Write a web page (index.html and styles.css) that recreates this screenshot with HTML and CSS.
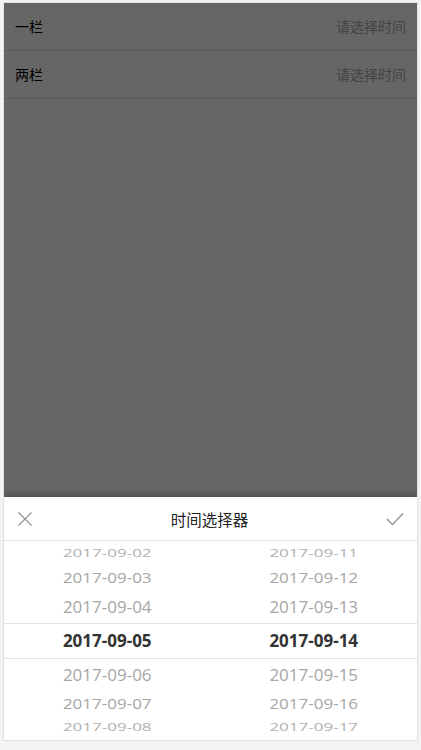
FILE: index.html
```html
<!DOCTYPE html>
<html lang="zh">
<head>
<meta charset="utf-8">
<title>时间选择器</title>
<link rel="stylesheet" href="styles.css">
</head>
<body>
<div class="screen">
  <ul class="list">
    <li class="row"><span class="label">一栏</span><span class="value">请选择时间</span></li>
    <li class="row"><span class="label">两栏</span><span class="value">请选择时间</span></li>
  </ul>
  <div class="mask"></div>
  <div class="picker">
    <div class="picker-head">
      <svg class="icon icon-close" viewBox="0 0 16 16" width="16" height="16"><path d="M1.5 1.5 L14.5 14.5 M14.5 1.5 L1.5 14.5" stroke="#999" stroke-width="1.4" fill="none"/></svg>
      <span class="picker-title">时间选择器</span>
      <svg class="icon icon-ok" viewBox="0 0 18 14" width="18" height="14"><path d="M1 7 L6.5 12.5 L17 1.5" stroke="#999" stroke-width="1.5" fill="none"/></svg>
    </div>
    <div class="wheels">
      <div class="band"></div>
      <div class="wheel">
        <div class="item far">2017-09-02</div>
        <div class="item mid">2017-09-03</div>
        <div class="item near">2017-09-04</div>
        <div class="item current">2017-09-05</div>
        <div class="item near">2017-09-06</div>
        <div class="item mid">2017-09-07</div>
        <div class="item far">2017-09-08</div>
      </div>
      <div class="wheel">
        <div class="item far">2017-09-11</div>
        <div class="item mid">2017-09-12</div>
        <div class="item near">2017-09-13</div>
        <div class="item current">2017-09-14</div>
        <div class="item near">2017-09-15</div>
        <div class="item mid">2017-09-16</div>
        <div class="item far">2017-09-17</div>
      </div>
    </div>
  </div>
</div>
</body>
</html>
```

FILE: styles.css
```css
* { box-sizing: border-box; }
html, body { margin: 0; padding: 0; }
body {
  background: #f3f3f3;
  padding: 2px 3px 0 3px;
  font-family: "Noto Sans CJK SC", "Open Sans", sans-serif;
}
.screen {
  position: relative;
  width: 415px;
  height: 739px;
  background: #fff;
  border: 1px solid #e2e2e2;
  overflow: hidden;
}
.list { list-style: none; margin: 0; padding: 0; }
.row {
  display: flex;
  justify-content: space-between;
  align-items: center;
  height: 48px;
  padding: 0 11px 2px 11px;
  border-bottom: 1px solid #dcdcdc;
  font-size: 14px;
}
.label { color: #000; }
.value { color: #a8a8a8; }
.mask {
  position: absolute;
  inset: 0;
  background: rgba(0, 0, 0, 0.6);
}
.picker {
  position: absolute;
  left: 0; right: 0; bottom: 0;
  height: 243px;
  background: #fff;
  box-shadow: 0 -3px 6px rgba(0, 0, 0, 0.25);
  display: flex;
  flex-direction: column;
}
.picker-head {
  height: 44px;
  display: flex;
  align-items: center;
  justify-content: space-between;
  padding: 1px 13px 0 13px;
  border-bottom: 1px solid #e4e4e4;
}
.picker-title { font-size: 15.5px; color: #222; }
.icon { display: block; }
.icon-close { width: 16px; height: 16px; margin-top: -1px; }
.icon-ok { width: 18px; height: 14px; margin-top: -1px; }
.wheels {
  position: relative;
  flex: 1;
  display: flex;
}
.band {
  position: absolute;
  left: 0; right: 0;
  top: 82px;
  height: 36px;
  border-top: 1px solid #e2e2e2;
  border-bottom: 1px solid #e2e2e2;
}
.wheel {
  flex: 1;
  display: flex;
  flex-direction: column;
  align-items: center;
  font-family: "Open Sans", "Noto Sans", sans-serif;
}
.item {
  display: flex;
  align-items: center;
  justify-content: center;
  font-size: 17px;
  color: #a6a6a6;
  white-space: nowrap;
  line-height: 1;
}
.item.far { height: 24px; transform: scaleY(0.6); color: #b0b0b0; }
.item.mid { height: 25px; transform: scaleY(0.85); }
.item.near { height: 33px; }
.item.current { height: 35px; color: #333; font-weight: 700; }
.wheel .item.far:last-child { height: 23px; }
```
